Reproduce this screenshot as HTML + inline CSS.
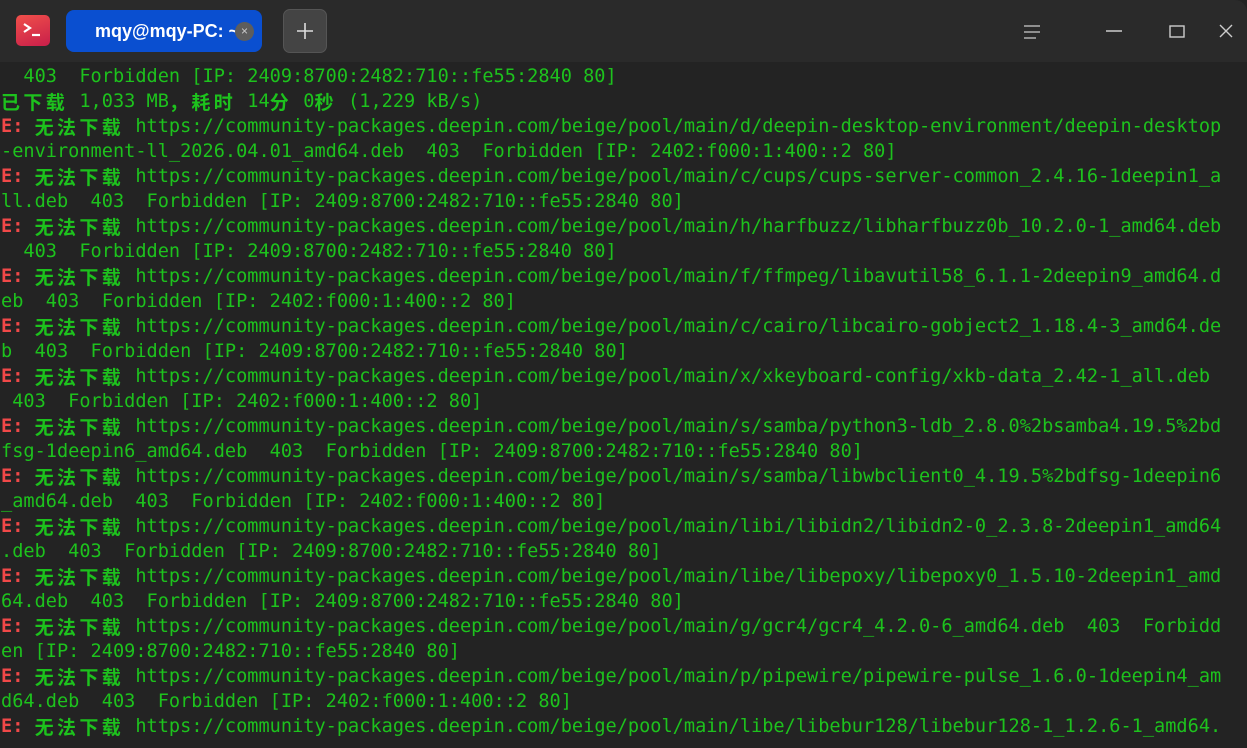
<!DOCTYPE html>
<html><head><meta charset="utf-8"><style>
html,body{margin:0;padding:0;width:1247px;height:748px;overflow:hidden;background:#232323}
.tb{position:absolute;left:0;top:0;width:1247px;height:62px;background:#2a2a2a;border-top-right-radius:12px}
.logo{position:absolute;left:16px;top:15px;width:34px;height:31px;border-radius:5px;background:linear-gradient(160deg,#f0504a,#c81e4a)}
.tab{position:absolute;left:66px;top:10px;width:196px;height:42px;border-radius:8px;background:#0a4fd0;color:#fff;font:bold 18px "Liberation Sans",sans-serif;line-height:42px}
.tab span{position:absolute;left:29px;top:0}
.x{position:absolute;left:169px;top:12px;width:19px;height:19px;border-radius:50%;background:#5d5d5d;color:#ccc;font:12px "Liberation Sans";line-height:19px;text-align:center}
.plus{position:absolute;left:283px;top:9px;width:44px;height:44px;border-radius:7px;background:#444;border:1px solid #555;box-sizing:border-box}
.term{position:absolute;left:1px;top:64px;width:1246px;font-family:"DejaVu Sans Mono","Noto Sans CJK SC",monospace;font-size:18.6px;line-height:25px;color:#1dc21d}
.term div{height:25px;white-space:pre;overflow:hidden}
i{font-style:normal;display:inline-block;width:22.4px;font-weight:bold;font-family:"Noto Sans CJK SC",sans-serif;font-size:19px;line-height:25px;vertical-align:top}
.r{color:#f04848;font-weight:bold}
.ul{position:absolute;left:0;top:159px;width:1222px;height:3px;background:#e8201f}
</style></head><body>
<div class="tb">
<div class="logo"><svg width="34" height="31"><path d="M8 9l6 4-6 4" stroke="#fff" stroke-width="2.2" fill="none"/><path d="M16 20h8" stroke="#fff" stroke-width="2.2"/></svg></div>
<div class="tab"><span>mqy@mqy-PC: ~</span><div class="x">×</div></div>
<div class="plus"><svg width="42" height="42"><path d="M21 13v16M13 21h16" stroke="#ddd" stroke-width="1.6"/></svg></div>
<svg style="position:absolute;left:1020px;top:20px" width="215" height="25">
<path d="M4 6h16M4 12h16M4 18h12" stroke="#ccc" stroke-width="1.3"/>
<path d="M86 11h16" stroke="#ccc" stroke-width="1.5"/>
<rect x="150" y="6" width="14" height="11" fill="none" stroke="#ccc" stroke-width="1.4"/>
<path d="M212 5l-12 12M200 5l12 12" stroke="#ccc" stroke-width="1.4"/>
</svg>
</div>
<div class="term"><div>  403  Forbidden [IP: 2409:8700:2482:710::fe55:2840 80]</div><div><i>已</i><i>下</i><i>载</i> 1,033 MB<i>，</i><i>耗</i><i>时</i> 14<i>分</i> 0<i>秒</i> (1,229 kB/s)</div><div><span class="r">E:</span> <i>无</i><i>法</i><i>下</i><i>载</i> https://community-packages.deepin.com/beige/pool/main/d/deepin-desktop-environment/deepin-desktop</div><div>-environment-ll_2026.04.01_amd64.deb  403  Forbidden [IP: 2402:f000:1:400::2 80]</div><div><span class="r">E:</span> <i>无</i><i>法</i><i>下</i><i>载</i> https://community-packages.deepin.com/beige/pool/main/c/cups/cups-server-common_2.4.16-1deepin1_a</div><div>ll.deb  403  Forbidden [IP: 2409:8700:2482:710::fe55:2840 80]</div><div><span class="r">E:</span> <i>无</i><i>法</i><i>下</i><i>载</i> https://community-packages.deepin.com/beige/pool/main/h/harfbuzz/libharfbuzz0b_10.2.0-1_amd64.deb</div><div>  403  Forbidden [IP: 2409:8700:2482:710::fe55:2840 80]</div><div><span class="r">E:</span> <i>无</i><i>法</i><i>下</i><i>载</i> https://community-packages.deepin.com/beige/pool/main/f/ffmpeg/libavutil58_6.1.1-2deepin9_amd64.d</div><div>eb  403  Forbidden [IP: 2402:f000:1:400::2 80]</div><div><span class="r">E:</span> <i>无</i><i>法</i><i>下</i><i>载</i> https://community-packages.deepin.com/beige/pool/main/c/cairo/libcairo-gobject2_1.18.4-3_amd64.de</div><div>b  403  Forbidden [IP: 2409:8700:2482:710::fe55:2840 80]</div><div><span class="r">E:</span> <i>无</i><i>法</i><i>下</i><i>载</i> https://community-packages.deepin.com/beige/pool/main/x/xkeyboard-config/xkb-data_2.42-1_all.deb</div><div> 403  Forbidden [IP: 2402:f000:1:400::2 80]</div><div><span class="r">E:</span> <i>无</i><i>法</i><i>下</i><i>载</i> https://community-packages.deepin.com/beige/pool/main/s/samba/python3-ldb_2.8.0%2bsamba4.19.5%2bd</div><div>fsg-1deepin6_amd64.deb  403  Forbidden [IP: 2409:8700:2482:710::fe55:2840 80]</div><div><span class="r">E:</span> <i>无</i><i>法</i><i>下</i><i>载</i> https://community-packages.deepin.com/beige/pool/main/s/samba/libwbclient0_4.19.5%2bdfsg-1deepin6</div><div>_amd64.deb  403  Forbidden [IP: 2402:f000:1:400::2 80]</div><div><span class="r">E:</span> <i>无</i><i>法</i><i>下</i><i>载</i> https://community-packages.deepin.com/beige/pool/main/libi/libidn2/libidn2-0_2.3.8-2deepin1_amd64</div><div>.deb  403  Forbidden [IP: 2409:8700:2482:710::fe55:2840 80]</div><div><span class="r">E:</span> <i>无</i><i>法</i><i>下</i><i>载</i> https://community-packages.deepin.com/beige/pool/main/libe/libepoxy/libepoxy0_1.5.10-2deepin1_amd</div><div>64.deb  403  Forbidden [IP: 2409:8700:2482:710::fe55:2840 80]</div><div><span class="r">E:</span> <i>无</i><i>法</i><i>下</i><i>载</i> https://community-packages.deepin.com/beige/pool/main/g/gcr4/gcr4_4.2.0-6_amd64.deb  403  Forbidd</div><div>en [IP: 2409:8700:2482:710::fe55:2840 80]</div><div><span class="r">E:</span> <i>无</i><i>法</i><i>下</i><i>载</i> https://community-packages.deepin.com/beige/pool/main/p/pipewire/pipewire-pulse_1.6.0-1deepin4_am</div><div>d64.deb  403  Forbidden [IP: 2402:f000:1:400::2 80]</div><div><span class="r">E:</span> <i>无</i><i>法</i><i>下</i><i>载</i> https://community-packages.deepin.com/beige/pool/main/libe/libebur128/libebur128-1_1.2.6-1_amd64.</div></div>
</body></html>
